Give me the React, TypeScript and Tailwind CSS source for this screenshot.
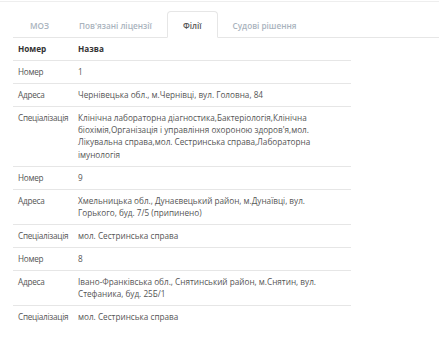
import React from "react";

type Row = { label: string; value: string };

const TABS = ["МОЗ", "Пов'язані ліцензії", "Філії", "Судові рішення"];
const ACTIVE = 2;

const ROWS: Row[] = [
  { label: "Номер", value: "1" },
  { label: "Адреса", value: "Чернівецька обл., м.Чернівці, вул. Головна, 84" },
  {
    label: "Спеціалізація",
    value:
      "Клінічна лабораторна діагностика,Бактеріологія,Клінічна біохімія,Організація і управління охороною здоров'я,мол. Лікувальна справа,мол. Сестринська справа,Лабораторна імунологія",
  },
  { label: "Номер", value: "9" },
  {
    label: "Адреса",
    value: "Хмельницька обл., Дунаєвецький район, м.Дунаївці, вул. Горького, буд. 7/5 (припинено)",
  },
  { label: "Спеціалізація", value: "мол. Сестринська справа" },
  { label: "Номер", value: "8" },
  {
    label: "Адреса",
    value: "Івано-Франківська обл., Снятинський район, м.Снятин, вул. Стефаника, буд. 25Б/1",
  },
  { label: "Спеціалізація", value: "мол. Сестринська справа" },
];

export default function App() {
  return (
    <div
      className="w-[439px] h-[340px] bg-white overflow-hidden text-[8.2px] leading-[12.3px] text-[#555]"
      style={{ fontFamily: '"Open Sans", "Noto Sans", sans-serif' }}
    >
      <div className="h-[2px] border-b border-[#eeeeee]" />

      <div className="pl-[13px] pt-[9px]">
        {/* вкладки */}
        <div className="flex pl-[2px] border-b border-[#e6e6e6] h-[27px] text-[8.2px]">
          {TABS.map((t, i) => (
            <div
              key={t}
              className={
                i === ACTIVE
                  ? "-mb-px px-[15px] pt-[4px] flex items-center border border-b-white border-[#e6e6e6] rounded-t-[4px] bg-white text-[#555] font-semibold"
                  : "px-[15px] pt-[4px] flex items-center text-[#a9b3bd] font-semibold"
              }
            >
              {t}
            </div>
          ))}
        </div>

        {/* таблиця */}
        <table className="w-[338px] table-fixed border-collapse">
          <thead>
            <tr className="border-b border-[#e6e6e6]">
              <th className="w-[60px] text-left font-bold text-[#333] px-[5px] py-[4.85px]">Номер</th>
              <th className="text-left font-bold text-[#333] px-[5px] py-[4.85px]">Назва</th>
            </tr>
          </thead>
          <tbody>
            {ROWS.map((r, i) => (
              <tr
                key={i}
                className={i === ROWS.length - 1 ? "" : "border-b border-[#e6e6e6]"}
              >
                <td className="align-top pl-[5px] py-[4.85px] whitespace-nowrap overflow-visible tracking-[-0.25px]">
                  {r.label}
                </td>
                <td className="align-top pl-[5px] pr-[20px] py-[4.85px]">{r.value}</td>
              </tr>
            ))}
          </tbody>
        </table>
      </div>
    </div>
  );
}
